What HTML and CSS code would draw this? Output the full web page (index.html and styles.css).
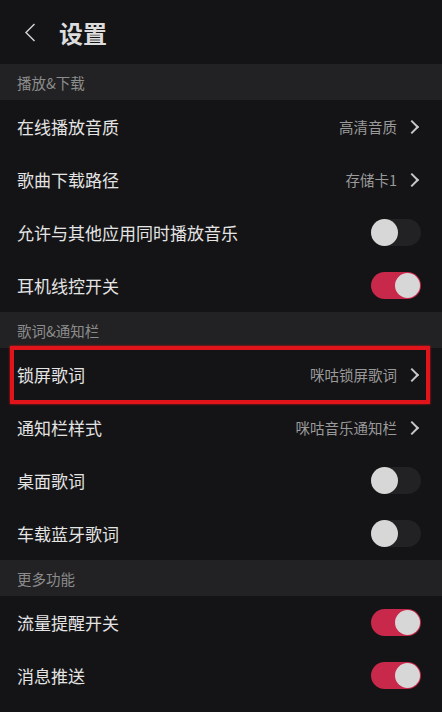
FILE: index.html
```html
<!DOCTYPE html>
<html>
<head>
<meta charset="utf-8">
<title>设置</title>
<link rel="stylesheet" href="styles.css">
</head>
<body>
<div id="topbar">
	<svg class="back" width="12" height="19" viewBox="0 0 12 19"><path d="M10.5 1 L2 9.5 L10.5 18" fill="none" stroke="#cfcfcf" stroke-width="1.5"/></svg>
	<span id="title">设置</span>
</div>

<div class="section">播放&amp;下载</div>
<div class="row"><span class="label">在线播放音质</span><span class="value">高清音质</span><span class="arrow"></span></div>
<div class="row"><span class="label">歌曲下载路径</span><span class="value">存储卡1</span><span class="arrow"></span></div>
<div class="row"><span class="label">允许与其他应用同时播放音乐</span><span class="switch"></span></div>
<div class="row"><span class="label">耳机线控开关</span><span class="switch on"></span></div>

<div class="section">歌词&amp;通知栏</div>
<div class="row marked"><span class="label">锁屏歌词</span><span class="value">咪咕锁屏歌词</span><span class="arrow"></span><div class="mark"></div></div>
<div class="row"><span class="label">通知栏样式</span><span class="value">咪咕音乐通知栏</span><span class="arrow"></span></div>
<div class="row"><span class="label">桌面歌词</span><span class="switch"></span></div>
<div class="row"><span class="label">车载蓝牙歌词</span><span class="switch"></span></div>

<div class="section">更多功能</div>
<div class="row"><span class="label">流量提醒开关</span><span class="switch on"></span></div>
<div class="row"><span class="label">消息推送</span><span class="switch on"></span></div>
</body>
</html>
```

FILE: styles.css
```css
html, body {
	margin: 0;
	background: #141416;
	color: #e4e4e4;
	font-family: "Noto Sans CJK SC", "Noto Sans", sans-serif;
	height: 100%;
	overflow: hidden;
}
#topbar {
	height: 64px;
	display: flex;
	align-items: center;
	padding-left: 24px;
}
#topbar .back {
	margin-top: 1px;
}
#title {
	font-size: 24px;
	font-weight: bold;
	color: #dcdcdc;
	margin-left: 23px;
}
.section {
	height: 36px;
	background: #222224;
	color: #8c8c8c;
	font-size: 14.5px;
	display: flex;
	align-items: center;
	padding-left: 17px;
}
.row {
	height: 53px;
	display: flex;
	align-items: center;
	padding: 0 21px 0 17px;
	position: relative;
}
.label {
	font-size: 17px;
	flex: 1;
}
.value {
	font-size: 14.5px;
	color: #9a9a9a;
	margin-right: 10px;
}
.arrow {
	width: 8px;
	height: 8px;
	border-top: 2px solid #c8c8c8;
	border-right: 2px solid #c8c8c8;
	transform: rotate(45deg);
	margin-right: 4px;
}
.switch {
	width: 50px;
	height: 27px;
	border-radius: 14px;
	background: #222224;
	position: relative;
}
.switch::after {
	content: "";
	position: absolute;
	top: 0;
	left: 0;
	width: 27px;
	height: 27px;
	border-radius: 50%;
	background: #d7d7d7;
}
.switch.on {
	background: #c8284a;
}
.switch.on::after {
	left: auto;
	right: 1px;
	top: 1px;
	width: 25px;
	height: 25px;
}
.mark {
	position: absolute;
	left: 10px;
	right: 12px;
	top: -2px;
	bottom: -3px;
	border: 4px solid #e0141a;
	box-shadow: 0 0 2px #e0141a;
}
```
